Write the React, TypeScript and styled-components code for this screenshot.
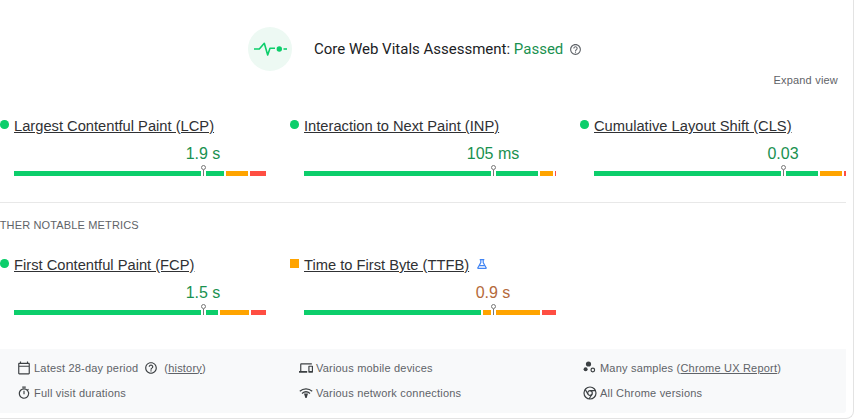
import React from 'react'
import styled, { createGlobalStyle } from 'styled-components'
import { MdOutlineCalendarToday, MdOutlineDevices, MdOutlineTimer, MdHelpOutline } from 'react-icons/md'

const GlobalStyle = createGlobalStyle`
  html, body {
    margin: 0;
    background: #fff;
    font-family: "Liberation Sans", Arial, sans-serif;
  }
`

const Card = styled.div`
  box-sizing: border-box;
  width: 854px;
  height: 419px;
  border-right: 1px solid #e3e3e3;
  border-bottom: 1px solid #e3e3e3;
  border-bottom-right-radius: 8px;
  overflow: hidden;
`

const Header = styled.div`
  display: flex;
  align-items: center;
  padding: 27px 0 0 248px;
`

const Badge = styled.div`
  width: 44px;
  height: 44px;
  border-radius: 50%;
  background: #edf9f3;
  display: flex;
  align-items: center;
  justify-content: center;
  margin-right: 22px;
`

const Title = styled.div`
  font-family: Roboto, sans-serif;
  font-size: 15px;
  font-weight: 400;
  line-height: 20px;
  color: #202124;
`

const Passed = styled.span`
  color: #1a9150;
`

const HelpIcon = styled(MdHelpOutline)`
  color: #5f6368;
  font-size: 13px;
  margin-left: 6px;
`

const ExpandRow = styled.div`
  padding: 2px 15px 0 0;
  text-align: right;
  font-size: 11px;
  line-height: 14px;
  letter-spacing: 0.2px;
  color: #5f6368;
`

const MetricsGrid = styled.div<{ $top: number }>`
  display: grid;
  grid-template-columns: repeat(3, 290px);
  padding-top: ${(p) => p.$top}px;
`

const Metric = styled.div`
  min-width: 0;
`

const LabelRow = styled.div`
  display: flex;
  align-items: center;
  height: 20px;
`

const Dot = styled.span`
  width: 8.5px;
  height: 8.5px;
  border-radius: 50%;
  background: #0cce6b;
  margin: -3px 5.5px 0 0;
`

const Square = styled.span`
  width: 8.5px;
  height: 9px;
  background: #ffa400;
  margin: -3px 5.5px 0 0;
`

const Label = styled.a`
  font-size: 14.7px;
  line-height: 20px;
  text-decoration: underline;
  color: #303134;
`

const Flask = styled.svg`
  width: 10px;
  height: 10px;
  margin: -3px 0 0 8px;
`

const Value = styled.div<{ $at: number; $warn?: boolean }>`
  margin: 8px 0 0 ${(p) => 14 + p.$at}px;
  width: 0;
  display: flex;
  justify-content: center;
  white-space: nowrap;
  font-size: 16px;
  line-height: 20px;
  color: ${(p) => (p.$warn ? '#b4693a' : '#1a9150')};
`

const Track = styled.div`
  position: relative;
  display: flex;
  gap: 2px;
  width: 252px;
  margin: 7px 0 0 14px;
`

const Segment = styled.div<{ $kind: string; $width: number }>`
  height: 5px;
  width: ${(p) => p.$width}px;
  background: ${(p) => (p.$kind === 'good' ? '#0cce6b' : p.$kind === 'mid' ? '#ffa400' : '#ff4e42')};
`

const Marker = styled.div<{ $at: number }>`
  position: absolute;
  left: ${(p) => p.$at - 2}px;
  top: -6px;
  width: 5px;
  height: 11px;
  background: linear-gradient(#fff, #fff) center bottom / 5px 5px no-repeat;
  display: flex;
  flex-direction: column;
  align-items: center;

  &::before {
    content: '';
    box-sizing: border-box;
    width: 5px;
    height: 5px;
    border: 1px solid #777;
    border-radius: 50%;
    background: #fff;
  }

  &::after {
    content: '';
    width: 1px;
    flex: 1;
    background: #777;
  }
`

const SectionDivider = styled.div`
  height: 1px;
  width: 846px;
  margin-top: 26px;
  background: #e8e8e8;
`

const SectionTitle = styled.div`
  margin: 15px 0 0 -9px;
  font-size: 11px;
  line-height: 14px;
  letter-spacing: 0.15px;
  color: #5f6368;
`

const Footer = styled.div`
  width: 846px;
  height: 64px;
  margin-top: 34px;
  background: #f8f9fa;
  border-radius: 0 0 3px 0;
  display: grid;
  grid-template-columns: 282px 284px 1fr;
  grid-template-rows: 25px 25px;
  box-sizing: border-box;
  padding: 6px 0 8px 17px;
`

const FootItem = styled.div`
  display: flex;
  align-items: center;
  font-size: 11px;
  letter-spacing: 0.2px;
  color: #5f6368;
  white-space: nowrap;
`

const IconSlot = styled.span`
  width: 17px;
  display: flex;
  align-items: center;
  color: #3c4043;
  font-size: 14px;
`

const FootLink = styled.span`
  text-decoration: underline;
`

const FootHelp = styled(MdHelpOutline)`
  font-size: 14px;
  color: #3c4043;
  margin: 0 6px 0 6px;
`

type Seg = [string, number]

interface MetricData {
  label: string
  value: string
  marker: number
  segments: Seg[]
  warn?: boolean
  lab?: boolean
}

const vitals: MetricData[] = [
  { label: 'Largest Contentful Paint (LCP)', value: '1.9 s', marker: 189, segments: [['good', 209.5], ['mid', 22], ['bad', 16.5]] },
  { label: 'Interaction to Next Paint (INP)', value: '105 ms', marker: 189, segments: [['good', 234], ['mid', 12.5], ['bad', 1.5]] },
  { label: 'Cumulative Layout Shift (CLS)', value: '0.03', marker: 189, segments: [['good', 224.3], ['mid', 21.3], ['bad', 2.4]] },
]

const other: MetricData[] = [
  { label: 'First Contentful Paint (FCP)', value: '1.5 s', marker: 189, segments: [['good', 204.3], ['mid', 29], ['bad', 14.7]] },
  { label: 'Time to First Byte (TTFB)', value: '0.9 s', marker: 189, segments: [['good', 177], ['mid', 57], ['bad', 14]], warn: true, lab: true },
]

const Pulse = () => (
  <svg width="33" height="16" viewBox="0 0 33 16" fill="none">
    <path d="M0 8h5.300l5 -5.700 3.400 11.700 2.300-6.700H21" stroke="#0cce6b" strokeWidth="1.600" strokeLinejoin="round" />
    <circle cx="25.300" cy="8" r="2.700" fill="#0cce6b" />
    <path d="M29.500 8H33" stroke="#0cce6b" strokeWidth="1.600" />
  </svg>
)

const MetricBlock = ({ m }: { m: MetricData }) => (
  <Metric>
    <LabelRow>
      {m.warn ? <Square /> : <Dot />}
      <Label>{m.label}</Label>
      {m.lab && (
        <Flask viewBox="0 0 10 10" fill="none" stroke="#4285f4" strokeWidth="1.200">
          <path d="M2.700.6h4.600M3.800.6v3L.9 8.700c-.2.300 0 .7.400.7h7.400c.4 0 .6-.4.400-.7L6.200 3.600v-3M2.500 6.600h5" />
        </Flask>
      )}
    </LabelRow>
    <Value $at={m.marker} $warn={m.warn}>{m.value}</Value>
    <Track>
      {m.segments.map(([kind, width], i) => (
        <Segment key={i} $kind={kind} $width={width} />
      ))}
      <Marker $at={m.marker} />
    </Track>
  </Metric>
)

const Samples = () => (
  <svg width="13" height="13" viewBox="0 0 13 13" fill="#3c4043">
    <circle cx="5.500" cy="3" r="2.600" />
    <circle cx="2.600" cy="8.200" r="2" />
    <circle cx="9.800" cy="9" r="1.800" fill="none" stroke="#3c4043" strokeWidth="1.200" />
  </svg>
)

const Network = () => (
  <svg width="14" height="12" viewBox="0 0 14 12" fill="none" stroke="#3c4043" strokeWidth="1.300">
    <path d="M.8 4.200C4.400 1 9.600 1 13.200 4.200M3 6.400c2.400-2 5.600-2 8 0" />
    <path d="M5 6.500h4L7.600 11h-1.200z" fill="#3c4043" stroke="none" />
  </svg>
)

const Chrome = () => (
  <svg width="14" height="14" viewBox="0 0 14 14" fill="none" stroke="#3c4043" strokeWidth="1.200">
    <circle cx="7" cy="7" r="6" />
    <circle cx="7" cy="7" r="2.300" />
    <path d="M7 4.700h5.600M5 8.200 2.200 3.400M9 8.200 6 13" />
  </svg>
)

export default function App() {
  return (
    <Card>
      <GlobalStyle />
      <Header>
        <Badge><Pulse /></Badge>
        <Title>
          Core Web Vitals Assessment: <Passed>Passed</Passed>
        </Title>
        <HelpIcon />
      </Header>
      <ExpandRow>Expand view</ExpandRow>
      <MetricsGrid $top={29}>
        {vitals.map((m) => <MetricBlock key={m.label} m={m} />)}
      </MetricsGrid>
      <SectionDivider />
      <SectionTitle>OTHER NOTABLE METRICS</SectionTitle>
      <MetricsGrid $top={23}>
        {other.map((m) => <MetricBlock key={m.label} m={m} />)}
      </MetricsGrid>
      <Footer>
        <FootItem>
          <IconSlot><MdOutlineCalendarToday /></IconSlot>
          Latest 28-day period<FootHelp />(<FootLink>history</FootLink>)
        </FootItem>
        <FootItem>
          <IconSlot><MdOutlineDevices /></IconSlot>
          Various mobile devices
        </FootItem>
        <FootItem>
          <IconSlot><Samples /></IconSlot>
          Many samples (<FootLink>Chrome UX Report</FootLink>)
        </FootItem>
        <FootItem>
          <IconSlot><MdOutlineTimer /></IconSlot>
          Full visit durations
        </FootItem>
        <FootItem>
          <IconSlot><Network /></IconSlot>
          Various network connections
        </FootItem>
        <FootItem>
          <IconSlot><Chrome /></IconSlot>
          All Chrome versions
        </FootItem>
      </Footer>
    </Card>
  )
}
